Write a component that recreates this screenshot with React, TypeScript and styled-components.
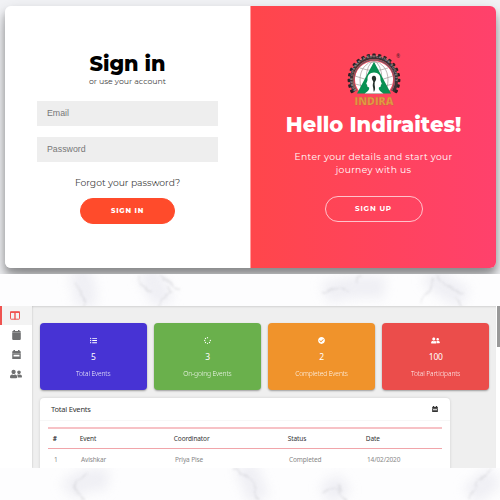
import React from 'react';
import styled, { createGlobalStyle } from 'styled-components';
import { FaUserFriends, FaListUl, FaCheckCircle, FaSpinner } from 'react-icons/fa';

const GlobalStyle = createGlobalStyle`
  * { box-sizing: border-box; }
  body { margin: 0; background: #fff; overflow: hidden; }
`;

const display = `'Montserrat', 'Inter', sans-serif`;
const ui = `'Noto Sans', 'Open Sans', sans-serif`;

const Page = styled.main`
  width: 500px;
  height: 500px;
  display: flex;
  flex-direction: column;
  overflow: hidden;
  font-family: ${ui};
`;

const LoginScreen = styled.section`
  height: 274px;
  padding: 6px 4px 6px 5px;
  background: #f2f3f6;
  overflow: hidden;
`;

const LoginCard = styled.div`
  display: flex;
  height: 262px;
  border-radius: 6px;
  box-shadow: 0 9px 18px rgba(0, 0, 0, 0.28), 0 6px 7px rgba(0, 0, 0, 0.25);
`;

const Panel = styled.div`
  display: flex;
  flex-direction: column;
  align-items: center;
  height: 262px;
  font-family: ${display};
  white-space: nowrap;
`;

const SignInPanel = styled(Panel)`
  width: 245px;
  padding: 45px 0 0;
  background: #fff;
  border-radius: 6px 0 0 6px;
`;

const WelcomePanel = styled(Panel)`
  width: 246px;
  padding: 46px 0 0;
  color: #fff;
  border-left: 1px solid #ff9c9c;
  background: linear-gradient(to right, #ff464b, #ff416c);
  border-radius: 0 6px 6px 0;
`;

const Line = styled.span<{ $size: number; $weight?: number; $track?: number; $height: number; $color?: string }>`
  display: block;
  font-size: ${(p) => p.$size}px;
  font-weight: ${(p) => p.$weight ?? 400};
  letter-spacing: ${(p) => p.$track ?? 0}px;
  line-height: ${(p) => p.$height}px;
  color: ${(p) => p.$color ?? 'inherit'};
`;

const Form = styled.form`
  display: flex;
  flex-direction: column;
  gap: 11px;
  margin: 15px 0 14px;
`;

const Field = styled.input`
  width: 181px;
  height: 25px;
  padding: 0 10px 1px;
  border: 0;
  background: #eee;
  font: 8.8px 'Liberation Sans', Arial, sans-serif;
  &::placeholder { color: #777; opacity: 1; }
`;

const Pill = styled.button<{ $outline?: boolean }>`
  display: flex;
  flex: none;
  align-items: center;
  justify-content: center;
  width: ${(p) => (p.$outline ? 98 : 95)}px;
  height: 26px;
  padding: 0;
  border: 1px solid ${(p) => (p.$outline ? '#ffc3cc' : '#ff4b2b')};
  border-radius: 13px;
  background: ${(p) => (p.$outline ? 'transparent' : '#ff4b2b')};
  color: #fff;
  font-family: ${display};
`;

const SignInAction = styled.div`
  margin-top: 8px;
`;

const Greeting = styled.div`
  margin-top: 6px;
`;

const Intro = styled.div`
  display: flex;
  flex-direction: column;
  align-items: center;
  margin: 12px 0 20px;
`;

const MarbleStrip = styled.div`
  flex: none;
  height: 32px;
  background: #fdfdfe;
  overflow: hidden;
  svg { display: block; }
`;

const Dashboard = styled.section`
  display: flex;
  height: 162px;
  background: #efefef;
  overflow: hidden;
`;

const Sidebar = styled.nav`
  width: 32px;
  background: #fff;
  box-shadow: 0 0 2px rgba(0, 0, 0, 0.2);
`;

const NavItem = styled.a<{ $active?: boolean }>`
  display: flex;
  align-items: center;
  height: 19.4px;
  padding-left: ${(p) => (p.$active ? 8 : 10)}px;
  border-left: ${(p) => (p.$active ? '2px solid #ef5350' : '0')};
  background: ${(p) => (p.$active ? '#f3f3f3' : '#fff')};
  color: ${(p) => (p.$active ? '#ef5350' : '#6f7071')};
  svg { display: block; }
`;

const NavGlyph = styled.span`
  padding-left: 1.5px;
`;

const Content = styled.div`
  width: 464px;
  padding: 17px 7px 0 8px;
  box-shadow: inset 0 2px 2px -1px rgba(0, 0, 0, 0.12);
`;

const Cards = styled.div`
  display: grid;
  grid-template-columns: repeat(4, 106.6px);
  justify-content: space-between;
  height: 67px;
`;

const StatCard = styled.article<{ $color: string }>`
  display: flex;
  flex-direction: column;
  align-items: center;
  padding-top: 14px;
  border-radius: 4px;
  background: ${(p) => p.$color};
  color: #fff;
  box-shadow: 0 1px 2px rgba(0, 0, 0, 0.35);
  svg { display: block; height: 7px; }
`;

const StatValue = styled.strong`
  margin-top: 7px;
  font-size: 8.5px;
  font-weight: 400;
  line-height: 12px;
  letter-spacing: -0.3px;
`;

const StatLabel = styled.span`
  margin-top: 6px;
  font-size: 6.6px;
  font-weight: 300;
  line-height: 10px;
  letter-spacing: -0.1px;
  opacity: 0.9;
`;

const TableCard = styled.div`
  width: 410px;
  height: 80px;
  margin-top: 8px;
  border-radius: 4px 4px 0 0;
  background: #fff;
  box-shadow: 0 0 3px rgba(0, 0, 0, 0.14);
`;

const TableTitle = styled.header`
  display: flex;
  justify-content: space-between;
  align-items: center;
  height: 23px;
  padding: 0 12px 0 11px;
  border-bottom: 1px solid #f7f7f7;
  color: #333;
  font-size: 7.5px;
  letter-spacing: -0.2px;
`;

const Row = styled.div<{ $head?: boolean }>`
  display: grid;
  grid-template-columns: 27px 94px 114px 78px 1fr;
  align-items: center;
  height: ${(p) => (p.$head ? 22 : 20)}px;
  margin: ${(p) => (p.$head ? '6px' : '0')} 8px 0;
  padding-left: ${(p) => (p.$head ? 4.8 : 6)}px;
  border-top: ${(p) => (p.$head ? '2px solid #f7c2c6' : '0')};
  border-bottom: ${(p) => (p.$head ? '1px solid #f1a5aa' : '0')};
  color: ${(p) => (p.$head ? '#333' : '#888')};
  font-size: 6.5px;
  letter-spacing: ${(p) => (p.$head ? -0.1 : -0.13)}px;
`;

const ScrollTrack = styled.div`
  width: 4px;
  padding-left: 1px;
  background: #fff;
`;

const ScrollThumb = styled.div`
  height: 41px;
  background: #999;
`;

const ColumnsIcon = () => (
  <svg width="10" height="9" viewBox="0 0 10 9" fill="none" stroke="currentColor">
    <rect x=".5" y=".8" width="9" height="7.4" rx=".6" strokeWidth="1" />
    <path d="M0 1.3h10M5 1v7.5" strokeWidth="1.4" />
  </svg>
);

const CalendarIcon = () => (
  <svg width="9" height="10" viewBox="0 0 9 10" fill="currentColor">
    <path d="M1.5 0H3v1h3V0h1.5v1H8a.8.8 0 0 1 .8.8v.9H.2v-.9A.8.8 0 0 1 1 1h.5z" />
    <path d="M.2 3h8.6v6.1a.8.8 0 0 1-.8.8H1a.8.8 0 0 1-.8-.8z" />
  </svg>
);

const EventIcon = ({ size = 9 }: { size?: number }) => (
  <svg width={size} height={size * 1.1} viewBox="0 0 9 10" fill="currentColor">
    <path d="M1.4 0H3v1h3V0h1.6v1H8a.8.8 0 0 1 .8.8v1.7H.2V1.8A.8.8 0 0 1 1 1h.4z" />
    <path fillRule="evenodd" d="M.2 3.5h8.6v5.6a.8.8 0 0 1-.8.8H1a.8.8 0 0 1-.8-.8zM1.5 4.9v1.6h6V4.9z" />
  </svg>
);

const teeth = Array.from({ length: 19 }, (_, i) => -117 + (i * 234) / 18);

const IndiraLogo = () => (
  <svg width="56" height="54" viewBox="0 0 56 54" overflow="visible">
    <defs>
      <path id="motto" d="M10.2 38.500A21.4 21.4 0 1 1 45.8 38.5" />
      <clipPath id="globe"><path d="M13 39A19 19 0 1 1 43 39L40 41H16z" /></clipPath>
    </defs>
    <g fill="#292023">
      {teeth.map((a) => (
        <rect key={a} x="26.3" y="1.6" width="3.4" height="4" rx=".8" transform={`rotate(${a} 28 28)`} />
      ))}
    </g>
    <path d="M8.6 39.6A22.6 22.6 0 1 1 47.4 39.6" fill="none" stroke="#3a3033" strokeWidth="3" />
    <path d="M10.6 38.6A20.3 20.3 0 1 1 45.4 38.6" fill="none" stroke="#6f5a60" strokeWidth="1.2" />
    <text fontFamily="Liberation Sans, sans-serif" fontWeight="700" fontSize="3.300" fill="#aaa0a3">
      <textPath href="#motto" textLength="82">SHREE CHANAKYA EDUCATION SOCIETY</textPath>
    </text>
    <g clipPath="url(#globe)">
      <circle cx="28" cy="28.5" r="19.3" fill="#fff" />
      <g fill="none" stroke="#a59a98" strokeWidth=".7">
        <ellipse cx="28" cy="28" rx="8" ry="18.5" />
        <ellipse cx="28" cy="28" rx="14" ry="18.5" />
        <path d="M9 24q19 8 38 0M9 32q19 6 38 0M14 16q14 5 28 0" />
      </g>
    </g>
    <path d="M28 9.7 45 41.5H11z" fill="#089052" />
    <g transform="translate(28 41.5) scale(.86 .96) translate(-28 -41)">
      <path d="M28 19c-5 0-8 3.200-7.500 7.400.2 1.600-1.800 3.800-1.500 4.700.2.500 1 .4 1 .9.1 2.100.5 2.600 2.200 2.500.9 2.800-1.400 4-5.200 6.500h22c-3.800-2.500-6.100-3.700-5.200-6.500 1.700.1 2.100-.4 2.200-2.500 0-.5.8-.4 1-.9.3-.9-1.700-3.100-1.500-4.700C36 22.200 33 19 28 19z" fill="#fff" />
      <path d="M28 22.500c-1.800 0-2.700 1.400-2.500 3 .2 1.400 1.300 2 1.700 3.500-.5 2-1 3.500-.3 5.500.5 1.200.3 3.300 1 5 1-1.700 1.700-3 1.200-5.500-.3-1.600-.6-3-.3-4.500.9-1.500 1.800-2.500 1.700-4-.2-1.800-.9-3-2.500-3z" fill="#26302c" />
    </g>
    <text x="50.2" y="5.8" fontSize="5" fontWeight="700" fontFamily="Liberation Sans, sans-serif" fill="#50202a">®</text>
    <text x="8.5" y="52.7" fontSize="10" fontWeight="800" fontFamily="Open Sans, sans-serif" fill="#e39a45" stroke="#bb6c2b" strokeWidth=".25" textLength="39" lengthAdjust="spacingAndGlyphs">INDIRA</text>
  </svg>
);

const Veins = ({ id, seed, soft, fine }: { id: string; seed: number; soft: string; fine: string }) => (
  <svg width="500" height="32" viewBox="0 0 500 32" fill="none">
    <defs>
      <filter id={id} filterUnits="userSpaceOnUse" x="0" y="-30" width="500" height="92">
        <feGaussianBlur stdDeviation="6" />
      </filter>
      <filter id={`${id}-fine`} filterUnits="userSpaceOnUse" x="0" y="-10" width="500" height="52">
        <feTurbulence type="fractalNoise" baseFrequency=".09" numOctaves="3" seed={seed} result="noise" />
        <feDisplacementMap in="SourceGraphic" in2="noise" scale="8" xChannelSelector="R" yChannelSelector="G" />
        <feGaussianBlur stdDeviation="1.2" />
      </filter>
    </defs>
    <path d={soft} stroke="#e6e6ee" strokeWidth="22" opacity=".6" filter={`url(#${id})`} />
    <path d={fine} stroke="#b5b5bb" strokeWidth="1.6" opacity=".3" filter={`url(#${id}-fine)`} />
  </svg>
);

const stats = [
  { icon: <FaListUl size={7} />, value: '5', label: 'Total Events', color: '#4733d4' },
  { icon: <FaSpinner size={7} />, value: '3', label: 'On-going Events', color: '#6ab04c' },
  { icon: <FaCheckCircle size={7} />, value: '2', label: 'Completed Events', color: '#f0932b' },
  { icon: <FaUserFriends size={9} />, value: '100', label: 'Total Participants', color: '#eb4d4b' },
];

export default function App() {
  return (
    <Page>
      <GlobalStyle />
      <LoginScreen>
        <LoginCard>
          <SignInPanel>
            <Line $size={20.8} $weight={800} $height={25} $color="#000">Sign in</Line>
            <Line $size={7.8} $height={10} $color="#444">or use your account</Line>
            <Form>
              <Field placeholder="Email" />
              <Field type="password" placeholder="Password" />
            </Form>
            <Line $size={9.2} $height={14} $color="#444">Forgot your password?</Line>
            <SignInAction>
              <Pill><Line $size={6.9} $weight={800} $track={0.8} $height={10}>SIGN IN</Line></Pill>
            </SignInAction>
          </SignInPanel>
          <WelcomePanel>
            <IndiraLogo />
            <Greeting><Line $size={21} $weight={800} $height={26}>Hello Indiraites!</Line></Greeting>
            <Intro>
              <Line $size={9.2} $height={13} $track={0.33}>Enter your details and start your</Line>
              <Line $size={9.2} $height={13} $track={0.33}>journey with us</Line>
            </Intro>
            <Pill $outline><Line $size={7.2} $weight={700} $track={0.8} $height={10}>SIGN UP</Line></Pill>
          </WelcomePanel>
        </LoginCard>
      </LoginScreen>
      <MarbleStrip>
        <Veins
          id="upper"
          seed={4}
          soft="M74 -2q15 10 10 34M145 -2q12 12 18 32M325 20q24-10 60-6M430 0q10 12 35 24"
          fine="M74 8q6 10 9 16t-2 12M138 3q3 11 12 14M160 2l12 9 8 5M168 12l2 7-8 5-4 8M323 18l16-4 10 4M360 0l-2 8M437 2l8 8 20 9M434 4l-8 18-6 7M456 24l8 9"
        />
      </MarbleStrip>
      <Dashboard>
        <Sidebar>
          <NavItem $active><ColumnsIcon /></NavItem>
          <NavItem><NavGlyph><CalendarIcon /></NavGlyph></NavItem>
          <NavItem><NavGlyph><EventIcon /></NavGlyph></NavItem>
          <NavItem><FaUserFriends size={12} /></NavItem>
        </Sidebar>
        <Content>
          <Cards>
            {stats.map((s) => (
              <StatCard key={s.label} $color={s.color}>
                {s.icon}
                <StatValue>{s.value}</StatValue>
                <StatLabel>{s.label}</StatLabel>
              </StatCard>
            ))}
          </Cards>
          <TableCard>
            <TableTitle>Total Events<EventIcon size={6} /></TableTitle>
            <Row $head><b>#</b><span>Event</span><span>Coordinator</span><span>Status</span><span>Date</span></Row>
            <Row><span>1</span><span>Avishkar</span><span>Priya Pise</span><span>Completed</span><span>14/02/2020</span></Row>
          </TableCard>
        </Content>
        <ScrollTrack><ScrollThumb /></ScrollTrack>
      </Dashboard>
      <MarbleStrip>
        <Veins
          id="lower"
          seed={9}
          soft="M68 24q15-16 40-12M245 -4l14 36M325 28l20-14M470 28l25-20"
          fine="M87 3q-12 11-11 16 0 8 10 12M233 1q8 4 19 12 4 8 6 20M322 24q10-8 16-2t7 11M338 16l5 8M492 2l-14 11-9 17"
        />
      </MarbleStrip>
    </Page>
  );
}
